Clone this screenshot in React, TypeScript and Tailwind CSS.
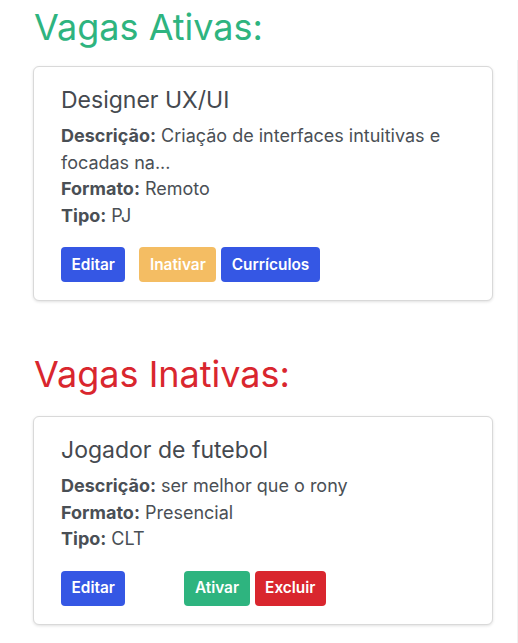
type Vaga = {
  titulo: string;
  descricao: string;
  formato: string;
  tipo: string;
};

const ativas: Vaga[] = [
  {
    titulo: 'Designer UX/UI',
    descricao: 'Criação de interfaces intuitivas e focadas na...',
    formato: 'Remoto',
    tipo: 'PJ',
  },
];

const inativas: Vaga[] = [
  {
    titulo: 'Jogador de futebol',
    descricao: 'ser melhor que o rony',
    formato: 'Presencial',
    tipo: 'CLT',
  },
];

const btn = 'h-[35px] px-[10.5px] rounded-[4px] text-white font-semibold text-[15.4px] leading-none';

function VagaCard({ vaga, ativa }: { vaga: Vaga; ativa: boolean }) {
  return (
    <div className="w-[460px] border border-[#d9d9d9] rounded-[6px] shadow-[0_1px_3px_rgba(0,0,0,0.12)] bg-white pl-[27px] pr-[20px] pt-[17px] pb-[18px]">
      <h3 className="text-[23px] leading-[32px] text-[#45494f] mb-[7px]">{vaga.titulo}</h3>
      <div className="text-[18px] leading-[26.5px] text-[#4a4f55]">
        <p>
          <strong className="font-bold">Descrição:</strong> {vaga.descricao}
        </p>
        <p>
          <strong className="font-bold">Formato:</strong> {vaga.formato}
        </p>
        <p>
          <strong className="font-bold">Tipo:</strong> {vaga.tipo}
        </p>
      </div>
      <div className="flex mt-[18px]">
        <button className={`${btn} bg-[#3557e4]`}>Editar</button>
        {ativa ? (
          <>
            <button className={`${btn} bg-[#f4bd63] ml-[14px]`}>Inativar</button>
            <button className={`${btn} bg-[#3557e4] ml-[5px]`}>Currículos</button>
          </>
        ) : (
          <>
            <button className={`${btn} bg-[#2eb47f] ml-[59px]`}>Ativar</button>
            <button className={`${btn} bg-[#d9262e] ml-[5px]`}>Excluir</button>
          </>
        )}
      </div>
    </div>
  );
}

export default function App() {
  return (
    <div className="min-h-screen bg-white font-['Inter',sans-serif] pl-[33px] relative">
      <h2 className="text-[36px] leading-[54px] text-[#2eb47f] pl-[1px] mb-[12px]">Vagas Ativas:</h2>
      {ativas.map((v) => (
        <VagaCard key={v.titulo} vaga={v} ativa />
      ))}
      <h2 className="text-[36px] leading-[54px] text-[#d9262e] pl-[1px] mt-[46px] mb-[15px]">Vagas Inativas:</h2>
      {inativas.map((v) => (
        <VagaCard key={v.titulo} vaga={v} ativa={false} />
      ))}
      <div className="absolute right-0 top-[60px] bottom-0 w-px bg-[#f0f0f0]" />
    </div>
  );
}
